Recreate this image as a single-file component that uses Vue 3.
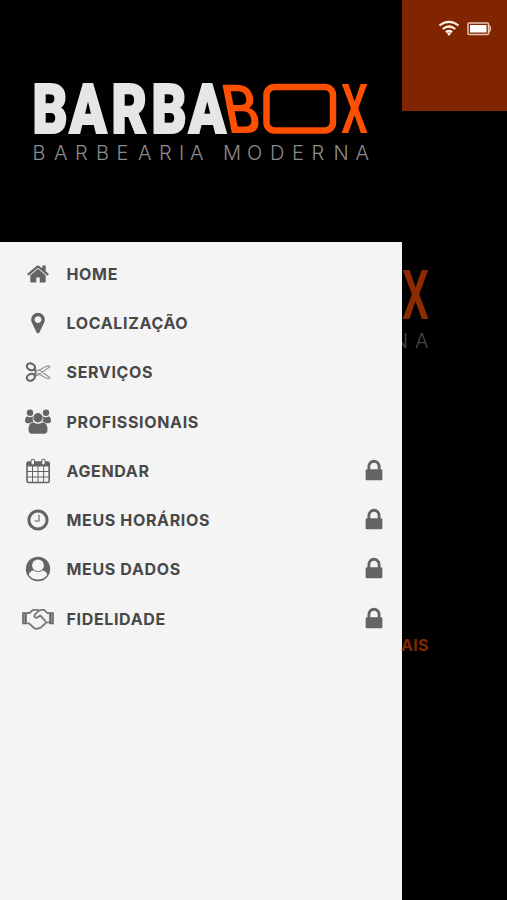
<script setup>
const items = [
  { label: 'HOME', icon: 'home' },
  { label: 'LOCALIZAÇÃO', icon: 'marker' },
  { label: 'SERVIÇOS', icon: 'scissors' },
  { label: 'PROFISSIONAIS', icon: 'users' },
  { label: 'AGENDAR', icon: 'calendar', locked: true },
  { label: 'MEUS HORÁRIOS', icon: 'clock', locked: true },
  { label: 'MEUS DADOS', icon: 'user', locked: true },
  { label: 'FIDELIDADE', icon: 'handshake', locked: true },
]
</script>

<template>
  <div class="screen">
    <aside class="drawer">
      <header class="brand">
        <svg class="logo" width="402" height="242" viewBox="0 0 402 242">
          <text class="logo-main" transform="translate(0 133) scale(.8 1)" x="40.500 87 139.500 189.500 236">BARBA</text>
          <text class="logo-b" transform="translate(231 132.500) skewX(11) scale(.84 1)" x="-4">B</text>
          <rect class="logo-box" x="266.500" y="87" width="66.500" height="43.500" rx="8" />
          <text class="logo-x" transform="translate(341 133) scale(.62 1)">X</text>
          <text class="logo-sub" transform="translate(0 160.300)" x="32.500 54 75 96 116.500 138 159 179 190">BARBEARIA</text>
          <text class="logo-sub" transform="translate(0 160.300)" x="223 247 270 292 311.500 333.500 355.500">MODERNA</text>
        </svg>
      </header>

      <nav class="menu">
        <a v-for="item in items" :key="item.label" class="menu-item">
          <svg v-if="item.icon === 'home'" class="icon" viewBox="-298 -75 2389 1941">
            <path d="M1472 992v480q0 26-19 45t-45 19h-384v-384h-256v384h-384q-26 0-45-19t-19-45v-480q0-1 .5-3t.5-3l575-474 575 474q1 2 1 6zm223-69l-62 74q-8 9-21 11h-3q-13 0-21-7l-692-577-692 577q-12 8-24 7-13-2-21-11l-62-74q-8-10-7-23.500t11-21.500l719-599q32-26 76-26t76 26l244 204v-195q0-14 9-23t23-9h192q14 0 23 9t9 23v408l219 182q10 8 11 21.500t-7 23.500z" />
          </svg>
          <svg v-else-if="item.icon === 'marker'" class="icon" viewBox="-298 -75 2389 1941">
            <path d="M1152 640q0-106-75-181t-181-75-181 75-75 181 75 181 181 75 181-75 75-181zm256 0q0 109-33 179l-364 774q-16 33-47.500 52t-67.500 19-67.500-19-46.500-52l-365-774q-33-70-33-179 0-212 150-362t362-150 362 150 150 362z" />
          </svg>
          <svg v-else-if="item.icon === 'scissors'" class="icon line" viewBox="0 0 32 26">
            <path class="blade" d="M12 9.500l4 2.200 8.500-4.500q2-.8 3.500.5l-11.500 8.200-4.500 1.600M12 16.700l4-2.200 8.500 4.800q2 .8 3.500-.5L16.500 10.500" />
            <ellipse class="handle" cx="8.900" cy="7.800" rx="4.200" ry="3.200" transform="rotate(25 8.900 7.800)" />
            <ellipse class="handle" cx="8.900" cy="18.300" rx="4.200" ry="3.200" transform="rotate(-25 8.900 18.300)" />
            <path d="M12 10l2 3.100-2 3" />
          </svg>
          <svg v-else-if="item.icon === 'users'" class="icon" viewBox="0 0 32 26">
            <circle cx="8" cy="3.700" r="3.200" />
            <circle cx="24" cy="3.700" r="3.200" />
            <path d="M5 7.200q3 1.800 6 .2-1 3 .4 5.300-2 .2-3.200 1.600H5.500Q3 14.300 3 11.500q0-3 2-4.300zM27 7.200q-3 1.800-6 .2 1 3-.4 5.300 2 .2 3.200 1.600h2.700q2.500 0 2.500-2.800 0-3-2-4.300z" />
            <circle cx="16" cy="8.700" r="4.700" />
            <path d="M11.500 13.200q4.500 3 9 0 5 .6 5 7.500 0 4-3.500 4H10q-3.500 0-3.500-4 0-6.900 5-7.500z" />
          </svg>
          <svg v-else-if="item.icon === 'calendar'" class="icon line" viewBox="0 0 32 26">
            <rect x="5" y="4" width="22.200" height="20.500" rx="1.500" />
            <path class="dot" d="M5 4h22.200v4.500H5z" />
            <path class="thin" d="M5 13.500h22M5 19h22M10.500 8v16M16 8v16M21.600 8v16" />
            <rect class="ring" x="9" y="1.300" width="3.600" height="5.800" rx="1.800" />
            <rect class="ring" x="19.600" y="1.300" width="3.600" height="5.800" rx="1.800" />
          </svg>
          <svg v-else-if="item.icon === 'clock'" class="icon line" viewBox="0 0 32 26">
            <circle class="face" cx="16" cy="13" r="9.100" />
            <path class="hands" d="M17 7.800v6.200h-4.500" />
          </svg>
          <svg v-else-if="item.icon === 'user'" class="icon" viewBox="0 0 32 26">
            <circle cx="16" cy="13" r="12.200" />
            <circle class="hole" cx="16" cy="9.300" r="5.900" />
            <path class="hole" d="M11.500 14.300q4.500 3.400 9 0 4.200 1 4.700 4.600-3.600 4.500-9.200 4.500t-9.200-4.500q.5-3.600 4.700-4.600z" />
            <path class="shade" d="M11.500 14q4.500 3.400 9 0" />
          </svg>
          <svg v-else class="icon line" viewBox="0 0 32 26">
            <path class="dot" d="M.2 6.300h4.600v12H.2zM27.200 6.300h4.600v12h-4.600z" />
            <path class="palm" d="M5 7h2.500L11 3.800h4.500l1.500.9 2-.9h3.200l3 3.200h2M5 17.300h2l5 4.700q2.200 1.700 4.500.3l2.500-1 2-1.800 2-1.600.8-1.600H27" />
            <path class="palm" d="M17 4.600l-4.300 4.300q-.8 2 1 2.800 1.700.4 3-1l1.500-1.300 5.400 6" />
            <path class="cuff" d="M2.200 7.500v9.500M29.800 7.500v9.500" />
          </svg>

          <span class="label">{{ item.label }}</span>
          <svg v-if="item.locked" class="lock" viewBox="0 0 1792 1792">
            <path d="M640 768h512v-192q0-106-75-181t-181-75-181 75-75 181v192zm832 96v576q0 40-28 68t-68 28h-960q-40 0-68-28t-28-68v-576q0-40 28-68t68-28h32v-192q0-184 132-316t316-132 316 132 132 316v192h32q40 0 68 28t28 68z" />
          </svg>
        </a>
      </nav>
    </aside>

    <main class="page">
      <div class="status">
        <svg width="22" height="18" viewBox="0 0 22 18">
          <path class="wave" d="M1.500 5.500q9.500-7.400 19 0M4.700 9q6.300-5 12.600 0M7.800 12.200q3.200-2.400 6.400 0" />
          <path class="signal" d="M9 13.200q2-1.200 4 0l-2 2.800z" />
        </svg>
        <svg width="26" height="16" viewBox="0 0 26 16">
          <rect class="battery" x="1" y="3" width="20.500" height="11.500" rx="1" />
          <rect class="charge" x="3" y="5" width="16.500" height="7.500" />
          <path class="cap" d="M21.500 5q3.800 3.700 0 7.500" />
        </svg>
      </div>
      <svg class="page-logo" width="105" height="100" viewBox="342 70 105 100">
        <text class="logo-x" transform="translate(342 134.500) scale(.62 1)">X</text>
        <text class="logo-sub" transform="translate(0 163.500)" x="333 355">NA</text>
      </svg>
      <span class="page-link">AIS</span>
    </main>
  </div>
</template>

<style>
body {
  background: #000;
}
</style>

<style scoped>
.screen {
  display: flex;
  width: 507px;
  height: 900px;
  overflow: hidden;
  background: #000;
  font-family: Inter, 'Liberation Sans', sans-serif;
}
.drawer {
  width: 402px;
  flex: none;
  background: #f4f4f4;
}
.brand {
  height: 242px;
  background: #000;
}
.logo,
.page-logo {
  display: block;
}
.logo-main {
  font: 900 68px Roboto, sans-serif;
  fill: #e6e6e6;
  stroke: #e6e6e6;
  stroke-width: 2.200;
}
.logo-b {
  font: 500 68px Roboto, sans-serif;
  fill: #ff4f00;
}
.logo-x {
  font: 600 69px Roboto, sans-serif;
  fill: #ff4f00;
}
.logo-box {
  fill: none;
  stroke: #ff4f00;
  stroke-width: 6.500;
}
.logo-sub {
  font: 300 20px Inter, sans-serif;
  fill: #8c8c8c;
}
.menu {
  padding-top: 7px;
}
.menu-item {
  display: flex;
  align-items: center;
  height: 49.300px;
  padding: 0 15px 0 21.500px;
}
.icon {
  width: 32px;
  height: 26px;
  flex: none;
  fill: #646464;
}
.line {
  fill: none;
  stroke: #646464;
  stroke-width: 1.600;
  stroke-linejoin: round;
}
.thin {
  stroke-width: 1;
}
.blade {
  stroke: #949494;
  stroke-width: 1.100;
}
.handle {
  stroke-width: 2.100;
}
.face {
  stroke-width: 3;
}
.hands {
  stroke: #8b8b8b;
  stroke-width: 1.600;
}
.palm {
  stroke: #777;
  stroke-width: 1.800;
}
.dot {
  fill: #646464;
  stroke: none;
}
.ring {
  fill: #f4f4f4;
  stroke-width: 1.100;
}
.hole {
  fill: #f4f4f4;
}
.shade {
  fill: none;
  stroke: #8b8b8b;
}
.cuff {
  stroke: #a5a5a5;
  stroke-width: 1;
}
.label {
  flex: 1;
  margin-left: 13px;
  font-size: 16px;
  font-weight: 700;
  letter-spacing: 0.650px;
  color: #484848;
}
.lock {
  width: 26px;
  height: 26px;
  fill: #646464;
}
.page {
  width: 105px;
  display: flex;
  flex-direction: column;
}
.status {
  display: flex;
  gap: 7px;
  height: 91px;
  padding: 20px 0 0 36px;
  background: #812500;
}
.wave {
  fill: none;
  stroke: #fff0e8;
  stroke-width: 2.200;
}
.signal,
.charge {
  fill: #fff;
}
.battery,
.cap {
  fill: none;
  stroke: #e6c7b8;
  stroke-width: 1.500;
}
.page-logo {
  margin-top: 143px;
}
.page-logo .logo-x {
  fill: #8c2b00;
}
.page-logo .logo-sub {
  fill: #484848;
}
.page-link {
  margin: 281px 0 0 -1px;
  font-size: 16px;
  line-height: 20px;
  font-weight: 700;
  letter-spacing: 0.300px;
  color: #812800;
}
</style>
